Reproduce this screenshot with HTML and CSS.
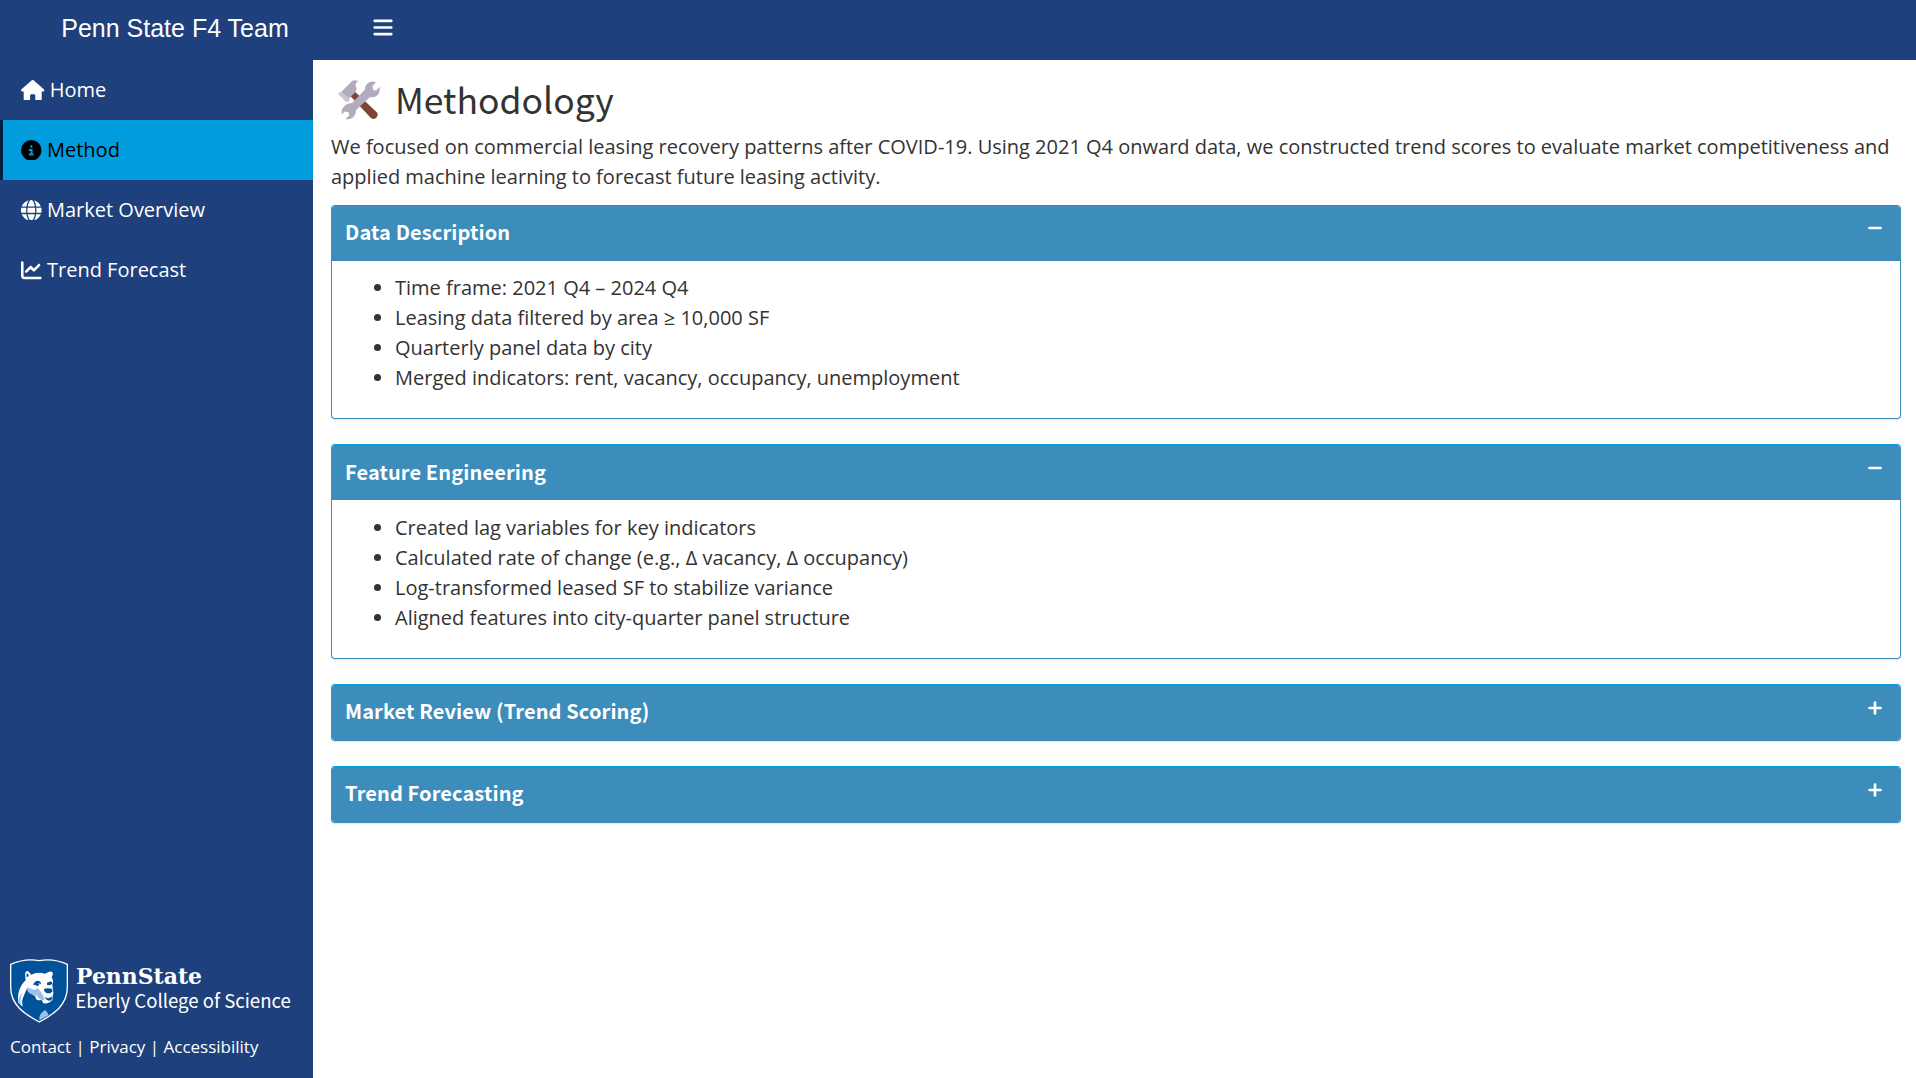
FILE: index.html
```html
<!DOCTYPE html>
<html lang="en">
<head>
<meta charset="utf-8">
<title>Penn State F4 Team</title>
<link rel="stylesheet" href="styles.css">
</head>
<body>
<header class="topbar">
  <div class="brand">Penn State F4 Team</div>
  <svg class="bars" viewBox="0 0 18 16"><path d="M1.2 1.8h15.6M1.2 8h15.6M1.2 14.200h15.6"/></svg>
</header>
<div class="layout">
  <aside class="sidebar">
    <nav class="menu">
      <a class="item"><svg class="icon home" viewBox="0 0 576 512"><path d="M575.8 255.5c0 18-15 32.1-32 32.1h-32l.7 160.2c0 2.7-.2 5.4-.5 8.1V472c0 22.1-17.9 40-40 40H456c-1.1 0-2.2 0-3.3-.1c-1.4 .1-2.8 .1-4.2 .1H416 392c-22.1 0-40-17.9-40-40V448 384c0-17.7-14.3-32-32-32H256c-17.700 0-32 14.300-32 32v64 24c0 22.100-17.900 40-40 40H160 128.100c-1.500 0-3-.1-4.500-.2c-1.200 .1-2.400 .2-3.600 .2H104c-22.100 0-40-17.900-40-40V360c0-.9 0-1.900 .1-2.800V287.600H32c-18 0-32-14-32-32.100c0-9 3-17 10-24L266.400 8c7-7 15-8 22-8s15 2 21 7L564.800 231.500c8 7 12 15 11 24z"/></svg><span>Home</span></a>
      <a class="item active"><svg class="icon" viewBox="0 0 512 512"><path d="M256 512A256 256 0 1 0 256 0a256 256 0 1 0 0 512zM216 336h24V272H216c-13.300 0-24-10.700-24-24s10.700-24 24-24h48c13.300 0 24 10.700 24 24v88h8c13.300 0 24 10.700 24 24s-10.700 24-24 24H216c-13.300 0-24-10.700-24-24s10.700-24 24-24zm40-208a32 32 0 1 1 0 64 32 32 0 1 1 0-64z"/></svg><span>Method</span></a>
      <a class="item"><svg class="icon" viewBox="0 0 512 512"><path d="M352 256c0 22.2-1.2 43.6-3.3 64H163.3c-2.2-20.4-3.3-41.8-3.3-64s1.2-43.6 3.3-64H348.7c2.2 20.4 3.3 41.8 3.3 64zm28.8-64H503.9c5.3 20.5 8.1 41.9 8.1 64s-2.8 43.5-8.1 64H380.8c2.1-20.6 3.2-42 3.2-64s-1.1-43.4-3.2-64zm112.6-32H376.7c-10-63.9-29.8-117.4-55.3-151.6c78.3 20.7 142 77.5 171.9 151.6zm-149.1 0H167.7c6.1-36.4 15.5-68.6 27-94.7c10.5-23.6 22.2-40.7 33.5-51.5C239.4 3.2 248.7 0 256 0s16.6 3.2 27.8 13.8c11.3 10.8 23 27.9 33.5 51.5c11.6 26 20.9 58.2 27 94.7zm-209 0H18.6C48.6 85.9 112.2 29.1 190.6 8.4C165.1 42.6 145.3 96.1 135.3 160zM8.1 192H131.2c-2.1 20.6-3.2 42-3.2 64s1.1 43.4 3.2 64H8.1C2.8 299.5 0 278.1 0 256s2.8-43.5 8.1-64zM194.7 446.6c-11.6-26-20.9-58.2-27-94.6H344.3c-6.1 36.4-15.5 68.6-27 94.6c-10.5 23.6-22.2 40.7-33.5 51.5C272.6 508.8 263.3 512 256 512s-16.6-3.2-27.8-13.8c-11.3-10.8-23-27.9-33.5-51.5zM135.3 352c10 63.9 29.8 117.4 55.3 151.6C112.2 482.9 48.6 426.1 18.6 352H135.3zm358.1 0c-30 74.1-93.6 130.9-171.9 151.6c25.5-34.2 45.2-87.7 55.3-151.6H493.4z"/></svg><span>Market Overview</span></a>
      <a class="item"><svg class="icon" viewBox="0 0 512 512"><path d="M64 64c0-17.7-14.3-32-32-32S0 46.3 0 64V400c0 44.2 35.8 80 80 80H480c17.7 0 32-14.3 32-32s-14.3-32-32-32H80c-8.8 0-16-7.2-16-16V64zm406.6 86.6c12.5-12.5 12.5-32.8 0-45.3s-32.8-12.5-45.3 0L320 210.7l-57.4-57.4c-12.5-12.5-32.8-12.5-45.3 0l-112 112c-12.5 12.5-12.5 32.8 0 45.3s32.8 12.5 45.3 0L240 221.3l57.4 57.4c12.5 12.5 32.8 12.5 45.3 0l128-128z"/></svg><span>Trend Forecast</span></a>
    </nav>
    <footer class="foot">
      <svg class="logo" viewBox="0 0 290 80">
        <g transform="translate(-5 0) scale(.33333)">
          <path class="shield" d="M17 43Q60 24 103 32Q145 24 187 43V112C187 166 146 193 103 216C60 193 17 166 17 112Z"/>
          <path class="white" d="M40 158C36 135 43 108 62 91L60 73Q61 62 69 63L79 74Q96 65 120 71L130 66Q143 62 144 72L140 82Q147 92 142 105L145 128L142 151Q132 162 115 160L109 149Q92 155 91 139L79 131Q67 125 68 112Q61 126 56 139Q49 150 53 170Z"/>
          <path class="pale" d="M67 113Q80 116 89 120L97 115Q104 119 115 137L119 151Q105 152 96 137L79 133Q64 126 67 113ZM53 128Q44 145 48 166L40 157Q40 139 53 128ZM120 180Q129 187 131 195L104 211Q99 194 120 180Z"/>
          <path class="blue" d="M64 72Q68 67 72 78L65 82ZM87 99Q96 88 106 95L109 102L100 100L103 106L94 108Q91 101 84 106ZM126 98L138 94L143 101L134 106L126 105ZM116 118Q123 113 140 116L143 124L136 130H126Q117 126 116 118ZM119 142Q132 148 143 139L139 151Q126 155 119 142Z"/>
        </g>
        <text class="wordmark" x="66" y="33.700" textLength="126" lengthAdjust="spacingAndGlyphs">PennState</text>
        <text class="college" x="65.300" y="57.500" textLength="215.500" lengthAdjust="spacingAndGlyphs">Eberly College of Science</text>
      </svg>
      <div class="links"><a>Contact</a> | <a>Privacy</a> | <a>Accessibility</a></div>
    </footer>
  </aside>
  <main class="content">
    <h1 class="title">
      <svg class="tools" viewBox="0 0 120 117">
        <path fill="#7d4533" d="M36 47L48 33L115 96Q119 103 113 110Q106 117 97 112Z"/>
        <path fill="#cdc3d6" d="M0 39L12 34L35 58L28 66Q23 65 19 60Q15 54 6 47Z"/>
        <path fill="#b4abbe" d="M10 34L42 2Q50-1 60 3L54 7Q48 15 55 24L51 35L32 54Z"/>
        <path fill="#b4abbe" d="M79 28Q79 10 95 5Q104 3 111 6L101 18L103 29L112 31L121 20Q125 35 114 46Q105 52 94 50L53 88Q53 100 45 108Q35 118 22 114L33 104L31 94L20 92L11 101Q8 87 17 78Q26 67 41 67Z"/>
      </svg>
      <span>Methodology</span>
    </h1>
    <p class="intro">We focused on commercial leasing recovery patterns after COVID-19. Using 2021 Q4 onward data, we constructed trend scores to evaluate market competitiveness and applied machine learning to forecast future leasing activity.</p>
    <section class="box">
      <div class="box-head"><h3>Data Description</h3><svg class="toggle" viewBox="0 0 14 14"><path d="M1.500 7h11"/></svg></div>
      <ul>
        <li>Time frame: 2021 Q4 – 2024 Q4</li>
        <li>Leasing data filtered by area ≥ 10,000 SF</li>
        <li>Quarterly panel data by city</li>
        <li>Merged indicators: rent, vacancy, occupancy, unemployment</li>
      </ul>
    </section>
    <section class="box">
      <div class="box-head"><h3>Feature Engineering</h3><svg class="toggle" viewBox="0 0 14 14"><path d="M1.500 7h11"/></svg></div>
      <ul>
        <li>Created lag variables for key indicators</li>
        <li>Calculated rate of change (e.g., Δ vacancy, Δ occupancy)</li>
        <li>Log-transformed leased SF to stabilize variance</li>
        <li>Aligned features into city-quarter panel structure</li>
      </ul>
    </section>
    <section class="box collapsed">
      <div class="box-head"><h3>Market Review (Trend Scoring)</h3><svg class="toggle" viewBox="0 0 14 14"><path d="M1.500 7h11M7 1.500v11"/></svg></div>
    </section>
    <section class="box collapsed">
      <div class="box-head"><h3>Trend Forecasting</h3><svg class="toggle" viewBox="0 0 14 14"><path d="M1.500 7h11M7 1.500v11"/></svg></div>
    </section>
  </main>
</div>
</body>
</html>
```
FILE: styles.css
```css
* { box-sizing: border-box; }
body {
  margin: 0;
  height: 100vh;
  display: flex;
  flex-direction: column;
  overflow: hidden;
  font: 20px/30px "Open Sans", sans-serif;
  color: #333;
  background: #fff;
}
.topbar {
  height: 60px;
  flex: none;
  display: flex;
  align-items: center;
  background: #1e407c;
  color: #fff;
}
.brand {
  width: 350px;
  flex: none;
  margin-right: 23px;
  text-align: center;
  font: 25px/56px "Liberation Sans", Arial, sans-serif;
  padding-bottom: 4px;
}
.bars { width: 20px; height: 17px; margin-bottom: 5px; fill: none; stroke: #fff; stroke-width: 2.5; stroke-linecap: round; }
.layout { flex: 1; display: flex; min-height: 0; }
.sidebar {
  width: 313px;
  flex: none;
  display: flex;
  flex-direction: column;
  justify-content: space-between;
  background: #1e407c;
  color: #fff;
}
.item {
  height: 60px;
  display: flex;
  align-items: center;
  gap: 5px;
  padding-left: 18.400px;
  border-left: 3px solid transparent;
}
.item.active { background: #009cde; border-left-color: #001e44; color: #000; }
.icon { width: 20.600px; height: 20.600px; fill: currentColor; flex: none; }
.icon.home { width: 23.400px; }
.foot { padding: 0 10px 16px; }
.logo { display: block; width: 290px; height: 80px; }
.shield { fill: #00529b; stroke: #fff; stroke-width: 4; }
.white { fill: #fff; }
.pale { fill: #9bc1ea; }
.blue { fill: #00529b; }
.wordmark { font: bold 23px "DejaVu Serif", serif; fill: #fff; }
.college { font: 18.8px "Noto Sans CJK SC", sans-serif; fill: #fff; }
.links { font-size: 17px; line-height: 30px; margin-top: 2px; white-space: nowrap; }
.content { flex: 1; padding: 15px 15px 0 18px; }
.title {
  margin: 0;
  height: 57px;
  display: flex;
  gap: 16px;
  padding-left: 7px;
  font: 400 35.500px/47px "Noto Sans CJK SC", sans-serif;
}
.tools { width: 41px; height: 40px; margin-top: 5px; flex: none; overflow: visible; }
.intro { margin: 0 0 12.600px; }
.box {
  height: 214.600px;
  margin-bottom: 25px;
  border: 1px solid #3c8dbc;
  border-top-color: #009cde;
  border-radius: 4px;
  box-shadow: 0 1px 1px rgba(0, 0, 0, .1);
  overflow: hidden;
}
.box.collapsed { height: 57px; }
.box-head {
  height: 55px;
  display: flex;
  justify-content: space-between;
  padding: 11.350px 18px 0 13px;
  background: #3c8dbc;
  color: #fff;
}
.box.collapsed .box-head { height: 56px; }
.box h3 { margin: 0; font: bold 20px/30px "Noto Sans CJK SC", sans-serif; letter-spacing: .12px; }
.toggle { width: 14px; height: 14px; margin-top: 4.500px; fill: none; stroke: #fff; stroke-width: 2.7; stroke-linecap: round; }
.box ul { margin: 12.350px 0 0; padding-left: 63px; }
```
